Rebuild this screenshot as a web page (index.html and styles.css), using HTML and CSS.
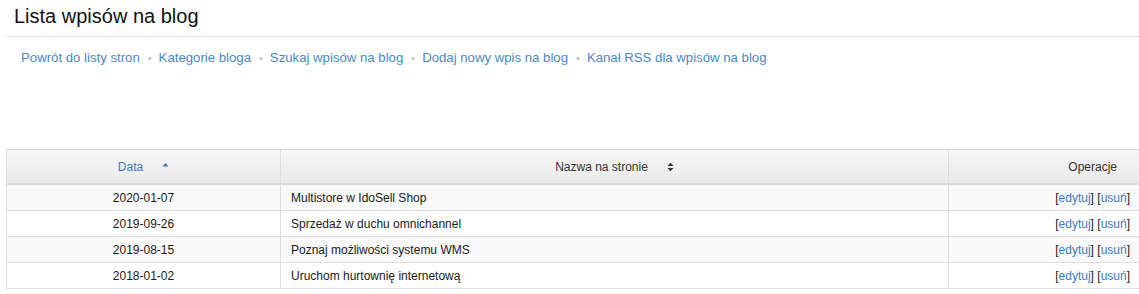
FILE: index.html
```html
<!DOCTYPE html>
<html lang="pl">
<head>
<meta charset="utf-8">
<title>Lista wpisów na blog</title>
<link rel="stylesheet" href="styles.css">
</head>
<body>
<div class="page">
  <div class="page-header">
    <h1 class="title">Lista wpisów na blog</h1>
  </div>
  <nav class="nav">
    <a class="nav-link" href="#">Powrót do listy stron</a><span class="sep">•</span><a class="nav-link" href="#">Kategorie bloga</a><span class="sep">•</span><a class="nav-link" href="#">Szukaj wpisów na blog</a><span class="sep">•</span><a class="nav-link" href="#">Dodaj nowy wpis na blog</a><span class="sep">•</span><a class="nav-link" href="#">Kanał RSS dla wpisów na blog</a>
  </nav>
  <div class="table-wrap">
    <table class="list">
      <colgroup>
        <col class="c-date">
        <col class="c-name">
        <col class="c-ops">
      </colgroup>
      <thead>
        <tr>
          <th class="th-center th-active">Data<svg class="sort-icon" width="7" height="10" viewBox="0 0 7 10"><path d="M0.5 4.5 L3.5 1 L6.5 4.5 Z" fill="#3a7cc6"/></svg></th>
          <th class="th-center">Nazwa na stronie<svg class="sort-icon" width="7" height="10" viewBox="0 0 7 10"><path d="M0.5 4 L3.5 0.8 L6.5 4 Z" fill="#333"/><path d="M0.5 6 L3.5 9.2 L6.5 6 Z" fill="#333"/></svg></th>
          <th class="th-right">Operacje</th>
        </tr>
      </thead>
      <tbody>
        <tr>
          <td class="td-center">2020-01-07</td>
          <td>Multistore w IdoSell Shop</td>
          <td class="td-right">[<a href="#">edytuj</a>] [<a href="#">usuń</a>]</td>
        </tr>
        <tr>
          <td class="td-center">2019-09-26</td>
          <td>Sprzedaż w duchu omnichannel</td>
          <td class="td-right">[<a href="#">edytuj</a>] [<a href="#">usuń</a>]</td>
        </tr>
        <tr>
          <td class="td-center">2019-08-15</td>
          <td>Poznaj możliwości systemu WMS</td>
          <td class="td-right">[<a href="#">edytuj</a>] [<a href="#">usuń</a>]</td>
        </tr>
        <tr>
          <td class="td-center">2018-01-02</td>
          <td>Uruchom hurtownię internetową</td>
          <td class="td-right">[<a href="#">edytuj</a>] [<a href="#">usuń</a>]</td>
        </tr>
      </tbody>
    </table>
  </div>
</div>
</body>
</html>
```

FILE: styles.css
```css
html, body {
  margin: 0;
  padding: 0;
  background: #ffffff;
  overflow-x: hidden;
}

body {
  font-family: "Liberation Sans", Arial, Helvetica, sans-serif;
  color: #222222;
}

.page {
  width: 1139px;
}

.page-header {
  margin: 0 0 0 6px;
  padding: 4px 8px 8px;
  border-bottom: 1px dotted #cfcfcf;
}

.title {
  margin: 0;
  font-size: 20px;
  line-height: 24px;
  font-weight: normal;
  color: #111111;
}

.nav {
  display: flex;
  align-items: baseline;
  margin: 0 0 0 6px;
  padding: 12px 15px;
  font-size: 13.2px;
  line-height: 18px;
}

.nav-link {
  color: #4a89c8;
  text-decoration: none;
}

.sep {
  color: #c0c0c0;
  font-size: 11px;
  margin: 0 7px 0 8px;
}

.table-wrap {
  margin-top: 70px;
  padding-left: 6px;
  overflow: hidden;
}

.list {
  width: 1134px;
  table-layout: fixed;
  border-collapse: collapse;
  font-size: 12px;
}

.c-date { width: 274px; }
.c-name { width: 668px; }
.c-ops { width: 192px; }

.list th {
  height: 33px;
  padding: 0 10px;
  font-weight: normal;
  color: #333333;
  background: linear-gradient(#f6f6f6, #e9e9e9);
  border: 1px solid #dddddd;
  border-bottom: 2px solid #dadada;
  vertical-align: middle;
}

.th-center { text-align: center; }
.th-right { text-align: right; padding-right: 23px !important; }
.th-active { color: #3a7cc6 !important; }

.sort-icon {
  margin-left: 19px;
  vertical-align: -1px;
}

.list td {
  height: 25px;
  padding: 0 10px;
  border: 1px solid #dddddd;
  vertical-align: middle;
  color: #1a1a1a;
  white-space: nowrap;
}

.list tbody tr:nth-child(odd) td {
  background: #f9f9f9;
}

.list tbody tr:nth-child(even) td {
  background: #ffffff;
}

.td-center { text-align: center; }
.td-right { text-align: right; }

.list td a {
  color: #3a7bc8;
  text-decoration: none;
}
```
